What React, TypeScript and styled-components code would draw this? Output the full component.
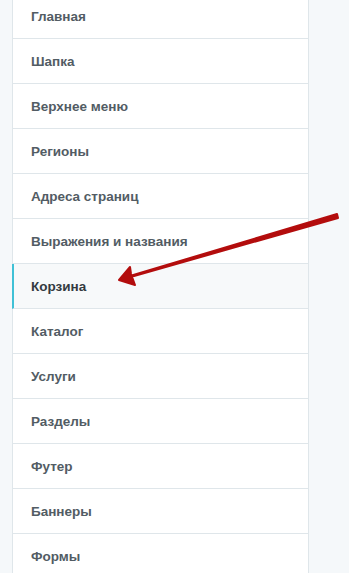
import React from "react";
import styled, { createGlobalStyle } from "styled-components";

const Global = createGlobalStyle`
  html, body { margin: 0; padding: 0; background: #f5f8fa; }
  body { font-family: "Liberation Sans", Arial, sans-serif; overflow: hidden; }
`;

const Page = styled.div`
  position: relative;
  width: 349px;
  height: 573px;
  overflow: hidden;
  background: #f5f8fa;
`;

const Menu = styled.nav`
  margin: -6px 0 0 12px;
  width: 295px;
  background: #fff;
  border-left: 1px solid #dfe6ea;
  border-right: 1px solid #dfe6ea;
  display: flex;
  flex-direction: column;
`;

const Item = styled.div<{ $active?: boolean }>`
  height: 44px;
  border-bottom: 1px solid #dfe6ea;
  display: flex;
  align-items: center;
  padding-left: ${(p) => (p.$active ? "17px" : "18px")};
  margin-left: ${(p) => (p.$active ? "-1px" : "0")};
  border-left: ${(p) => (p.$active ? "2px solid #3fc1d6" : "none")};
  background: ${(p) => (p.$active ? "#f7f9fa" : "#fff")};
  color: ${(p) => (p.$active ? "#333a40" : "#525c64")};
  font-size: 13.5px;
  font-weight: bold;
`;

const Arrow = styled.svg`
  position: absolute;
  left: 0;
  top: 0;
  pointer-events: none;
`;

const items = [
  "Главная",
  "Шапка",
  "Верхнее меню",
  "Регионы",
  "Адреса страниц",
  "Выражения и названия",
  "Корзина",
  "Каталог",
  "Услуги",
  "Разделы",
  "Футер",
  "Баннеры",
  "Формы",
];

export default function App() {
  return (
    <Page>
      <Global />
      <Menu>
        {items.map((t) => (
          <Item key={t} $active={t === "Корзина"}>
            {t}
          </Item>
        ))}
      </Menu>
      <Arrow width="349" height="573" viewBox="0 0 349 573">
        <path
          d="M337 214 L338 218 L134 276 L130 276 Z"
          fill="#b30d0d"
          stroke="#b30d0d"
          strokeWidth="2"
          strokeLinejoin="round"
        />
        <path
          d="M119 280 L130 267 L131 274 L135 285 Z"
          fill="#b30d0d"
          stroke="#b30d0d"
          strokeWidth="2"
          strokeLinejoin="round"
        />
      </Arrow>
    </Page>
  );
}
